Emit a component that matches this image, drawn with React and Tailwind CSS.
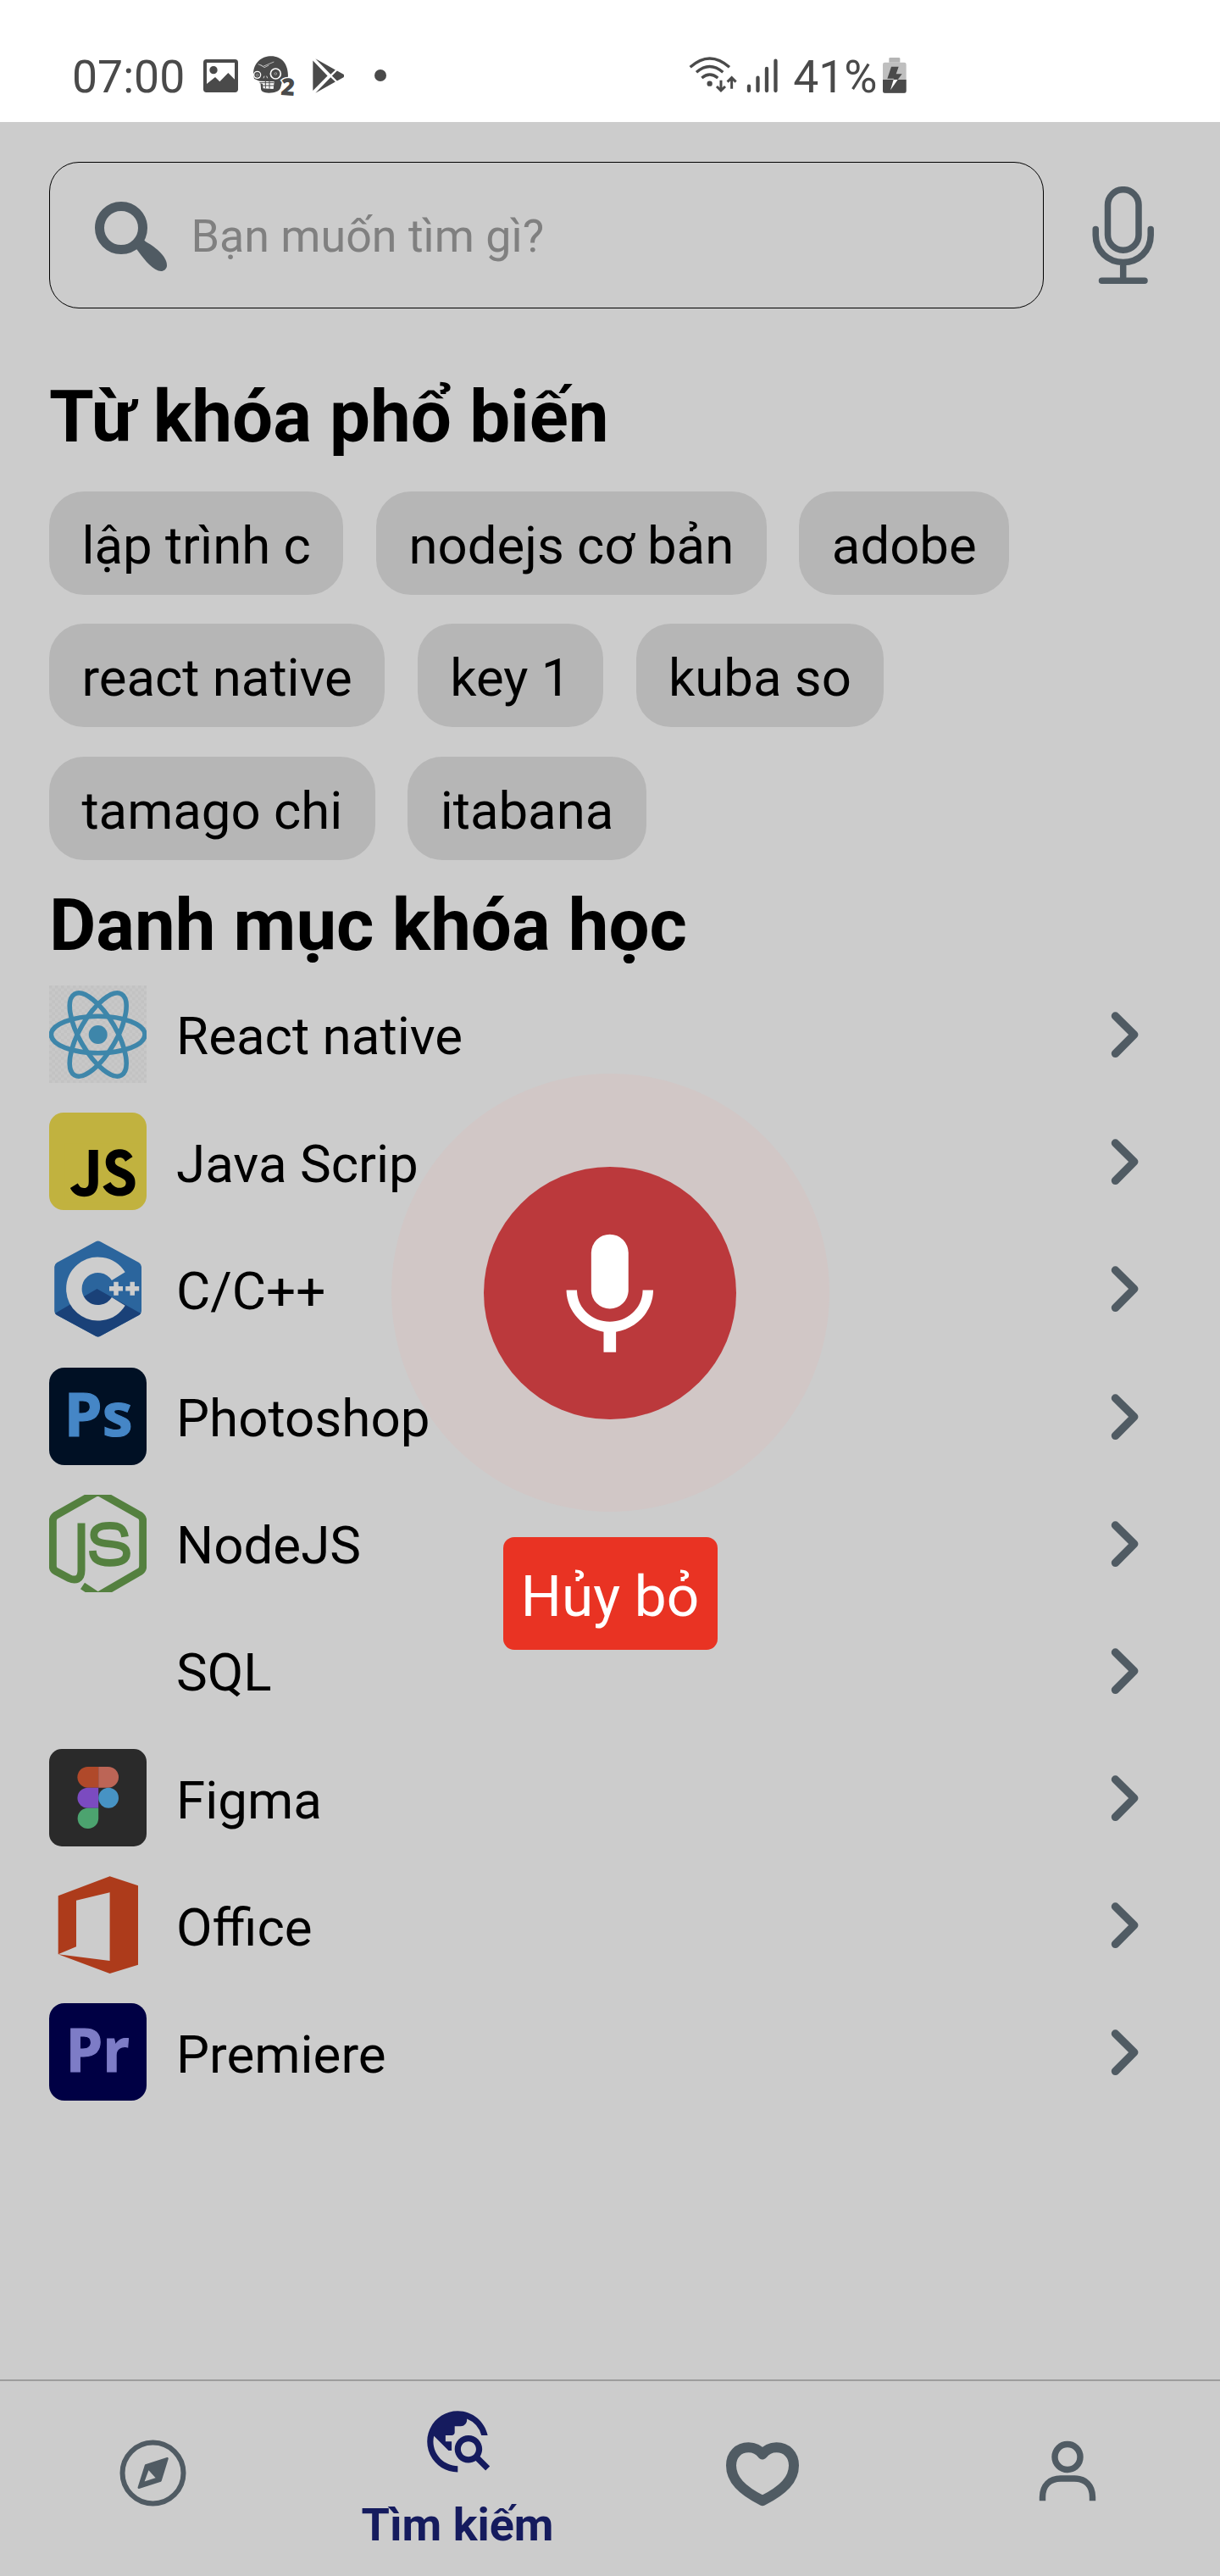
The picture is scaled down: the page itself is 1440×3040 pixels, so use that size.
import { SiJavascript } from "react-icons/si";
import { MdTravelExplore } from "react-icons/md";

const INK = "#4a4a4a";
const SLATE = "#505b63";

function StatusBar() {
  return (
    <header className="flex h-[144px] shrink-0 items-start bg-white pl-[85px] text-[53.5px] leading-[54px] text-[#4a4a4a]">
      <div className="flex w-[728px] items-start">
        <span className="mt-[64px] w-[155px]">07:00</span>
        <svg className="mt-[69.7px] h-[39px] w-[41px]" viewBox="30 41 123 117">
          <rect x="30" y="41" width="123" height="117" rx="11" fill={INK} />
          <path d="M42 53H141V112L118 89L88 120L72 104L42 128Z" fill="#fff" />
          <circle cx="66" cy="79" r="14" fill={INK} />
        </svg>
        <svg className="mt-[65.7px] ml-[18px] h-[48px] w-[49px] overflow-visible" viewBox="207 29 147 144">
          <path d="M207 92C208 52 238 30 270 30C308 30 331 58 330 104L312 108L304 140C300 154 284 160 262 160C244 160 233 154 234 143L232 120L210 110Z" fill={INK} />
          <path d="M224 58L242 66L280 50M232 60L246 70L262 62" fill="none" stroke="#bbb" strokeWidth="3" />
          <circle cx="221" cy="96" r="12" fill={INK} stroke="#fff" strokeWidth="4" />
          <circle cx="286" cy="92" r="18" fill={INK} stroke="#fff" strokeWidth="5" />
          <circle cx="221" cy="97" r="4" fill="none" stroke="#bbb" strokeWidth="2" />
          <circle cx="286" cy="92" r="4" fill="none" stroke="#bbb" strokeWidth="2" />
          <path d="M243 108L246 100M254 100L257 108" stroke="#ddd" strokeWidth="3" />
          <path d="M229 118L281 120L278 146L242 144L240 128L229 124Z" fill="#fff" />
          <path d="M229 124H280M250 119V144M264 119V145M240 134H280" stroke={INK} strokeWidth="3" />
          <text x="303" y="167" fontFamily="Open Sans" fontWeight="800" fontSize="84" fill={INK} stroke="#fff" strokeWidth="9" paintOrder="stroke" transform="rotate(4 303 167)">2</text>
        </svg>
        <svg className="mt-[69px] ml-[20.5px] h-[41px] w-[37.5px]" viewBox="415 39 113 122">
          <path d="M416 46L468 100L416 153ZM425 39L496 79L479 95ZM502 82L525 95Q530 100 525 105L502 118L484 100ZM425 161L496 121L479 105Z" fill={INK} />
        </svg>
        <span className="mt-[82px] ml-[36px] h-[14px] w-[14px] rounded-full bg-[#4a4a4a]" />
      </div>
      <svg className="mt-[66px] h-[44px] w-[57.3px]" viewBox="38 30 172 132">
        <g fill="none" stroke={INK} strokeWidth="10">
          <path d="M43 70Q112 8 182 70" />
          <path d="M65 88Q112 47 159 88" />
          <path d="M84 108Q112 84 141 108" />
          <path d="M152 116V152M137 138L152 153L167 138M190 146V108M175 122L190 107L205 122" strokeWidth="9" />
        </g>
        <circle cx="112" cy="128" r="9.5" fill={INK} />
      </svg>
      <svg className="mt-[69.3px] ml-[10.3px] h-[40.7px] w-[37.3px]" viewBox="241 40 112 122">
        <path d="M250 138V154M281.500 108V154M313 76V154M344.500 48V154" stroke={INK} strokeWidth="13" strokeLinecap="round" />
      </svg>
      <span className="mt-[64px] ml-[18.3px] w-[106.300px]">41%</span>
      <svg className="mt-[67.7px] h-[42.3px] w-[27.7px]" viewBox="727 35 83 127">
        <path d="M749 52V39Q749 35 753 35H784Q788 35 788 39V52Z" fill="#b5b5b5" />
        <rect x="727" y="52" width="83" height="110" rx="7" fill="#bfbfbf" />
        <path d="M727 113H810V152Q810 160 802 160H735Q727 160 727 152Z" fill={INK} />
        <path d="M757 67H783L774 93H795L780 113H764L767 109H743Z" fill={INK} />
        <path d="M765 113H780L754 150Z" fill="#fff" />
      </svg>
    </header>
  );
}

function SearchRow() {
  return (
    <div className="mt-[47px] flex items-start">
      <div className="flex h-[173px] w-[1174px] items-center rounded-[35px] border border-black pl-[53px]">
        <svg className="mt-[5px] h-[84px] w-[87px] shrink-0" viewBox="0 0 87 84">
          <circle cx="31" cy="31" r="25.500" fill="none" stroke={SLATE} strokeWidth="11" />
          <path d="M47 54L57 44Q59 47 63 49C75 56 86 67 85 76C84 81 80 83 75 81.500C65 78 56 65 50 57Q49 56 47 54Z" fill={SLATE} />
        </svg>
        <span className="mt-[2px] ml-[26.500px] text-[53.8px] leading-[70px] text-[#808080]">Bạn muốn tìm gì?</span>
      </div>
      <svg className="mt-[29px] ml-[56.500px] h-[116px] w-[74px]" viewBox="0 0 74 116" fill="none" stroke={SLATE} strokeWidth="7.500" strokeLinecap="round">
        <rect x="18.500" y="3.700" width="36.500" height="71.500" rx="18.200" />
        <path d="M4.250 50.500V57.500C4.250 76 18.500 89.500 36.700 89.500S69.200 76 69.200 57.500V50.500M36.700 91V110M11.500 111.300H62" />
      </svg>
    </div>
  );
}

const keywordRows = [
  ["lập trình c", "nodejs cơ bản", "adobe"],
  ["react native", "key 1", "kuba so"],
  ["tamago chi", "itabana"],
];

function ReactLogo() {
  return (
    <svg className="h-full w-full" viewBox="0 0 115 115.500">
      <defs>
        <pattern id="checker" width="7" height="7" patternUnits="userSpaceOnUse">
          <rect width="7" height="7" fill="#c8c8c8" />
          <rect width="3.500" height="3.500" fill="#c2c2c2" />
          <rect x="3.500" y="3.500" width="3.500" height="3.500" fill="#c2c2c2" />
        </pattern>
      </defs>
      <rect width="115" height="115.500" fill="url(#checker)" />
      <g fill="none" stroke="#3e86aa" strokeWidth="5.600">
        <ellipse cx="57.700" cy="58" rx="55.300" ry="21.700" />
        <ellipse cx="57.700" cy="58" rx="55.300" ry="21.700" transform="rotate(60 57.700 58)" />
        <ellipse cx="57.700" cy="58" rx="55.300" ry="21.700" transform="rotate(120 57.700 58)" />
      </g>
      <circle cx="57.700" cy="58" r="11" fill="#3e86aa" />
    </svg>
  );
}

function JsLogo() {
  return (
    <svg className="h-full w-full" viewBox="0 0 115 115.500">
      <rect width="115" height="115" rx="17" fill="#c1b23f" />
      <rect x="24" y="43" width="80" height="58" fill="#000" />
      <svg x="18.500" y="36.500" width="92.500" height="70" viewBox="5 9.500 19 14.140" preserveAspectRatio="none">
        <SiJavascript size={24} color="#c1b23f" />
      </svg>
    </svg>
  );
}

function CppLogo() {
  return (
    <svg className="h-full w-full" viewBox="0 0 115 115.500">
      <defs>
        <clipPath id="hex">
          <path d="M54.500 2.500Q57.700 .5 60.900 2.500L106 27Q109 29 109 32V83.500Q109 87 106 89L60.900 113.500Q57.700 115.500 54.500 113.500L9.200 89Q6.200 87 6.200 83.500V32Q6.200 29 9.200 27Z" />
        </clipPath>
      </defs>
      <g clipPath="url(#hex)">
        <rect width="115" height="116" fill="#2b659d" />
        <path d="M0 91L56.500 58L115 91V116H0Z" fill="#1a4178" />
      </g>
      <path d="M81.800 43.200A28.300 28.300 0 1 0 81.800 72.800" fill="none" stroke="#cdcdcd" strokeWidth="18.500" />
      <path d="M71 57.800H87M79 49.800V65.800M90.200 57.800H106.200M98.200 49.800V65.800" stroke="#cdcdcd" strokeWidth="5.500" />
    </svg>
  );
}

function AdobeLogo({ label, x, width, bg, fg }) {
  return (
    <svg className="h-full w-full" viewBox="0 0 115 115.500">
      <rect width="115" height="115" rx="18" fill={bg} />
      <text x={x} y="81" fontFamily="Open Sans" fontWeight="700" fontSize="72" textLength={width} lengthAdjust="spacingAndGlyphs" fill={fg} stroke={fg} strokeWidth="1.2">{label}</text>
    </svg>
  );
}

function NodeLogo() {
  return (
    <svg className="h-full w-full" viewBox="0 0 115 115.500" fill="none" stroke="#54803f">
      <path d="M38 33.500V89C38 100 31 102 23.500 98.500L7.500 90Q4.300 88 4.300 84V31Q4.300 27 7.500 24.500L57.500 -3.700L107.500 24.500Q110.700 27 110.700 31V84Q110.700 88 107.500 90.500L57.500 119.400L39.500 107.500" strokeWidth="9" />
      <path d="M89.500 49.700C88 39 83 36.400 71.500 36.400C59 36.400 52.800 40 52.800 47.500C52.800 55 59 56.700 71.500 58C85 59.500 91.500 61.500 91.500 69C91.500 77 85 80.300 71.500 80.300C58 80.300 51.700 76 51.400 66" strokeWidth="8.700" />
    </svg>
  );
}

function FigmaLogo() {
  return (
    <svg className="h-full w-full" viewBox="0 0 115 115.500">
      <rect width="115" height="115" rx="15" fill="#2a2a2a" />
      <path d="M58.200 21H45.700A12.300 12.350 0 0 0 45.700 45.700H58.200Z" fill="#b0492a" />
      <path d="M58.200 21H69.700A12.300 12.350 0 0 1 69.700 45.700H58.200Z" fill="#bc6556" />
      <path d="M58.200 45.700H45.700A12.300 12 0 0 0 45.700 69.700H58.200Z" fill="#7b4bc0" />
      <ellipse cx="70.100" cy="57.700" rx="11.900" ry="12" fill="#4793c4" />
      <path d="M58.200 69.700H45.700A12.300 12.150 0 1 0 58.200 82Z" fill="#4ca36f" />
    </svg>
  );
}

function OfficeLogo() {
  return (
    <svg className="h-full w-full" viewBox="0 0 115 115.500">
      <path d="M10.700 92.300V23.300L71.600 .3L105 11.300V104.700L71.600 115L10.700 92.300L71.600 100V19.300L32 28.700V83.300Z" fill="#ad3b1b" />
    </svg>
  );
}

const categories = [
  { name: "React native", logo: <ReactLogo /> },
  { name: "Java Scrip", logo: <JsLogo /> },
  { name: "C/C++", logo: <CppLogo /> },
  { name: "Photoshop", logo: <AdobeLogo label="Ps" x={17.5} width={81} bg="#001024" fg="#4586c6" /> },
  { name: "NodeJS", logo: <NodeLogo /> },
  { name: "SQL", logo: null },
  { name: "Figma", logo: <FigmaLogo /> },
  { name: "Office", logo: <OfficeLogo /> },
  { name: "Premiere", logo: <AdobeLogo label="Pr" x={19.5} width={75.5} bg="#000044" fg="#7d7cc6" /> },
];

function CategoryRow({ name, logo }) {
  return (
    <li className="flex h-[150.2px] items-start">
      <div className="h-[115.5px] w-[115px] shrink-0 overflow-hidden">{logo}</div>
      <span className="mt-[20.5px] ml-[35px] grow text-[61.9px] leading-[80px]">{name}</span>
      <svg className="mt-[30px] mr-[95px] h-[56px] w-[34px]" viewBox="0 0 34 56" fill="none" stroke={SLATE} strokeWidth="9.500" strokeLinecap="round" strokeLinejoin="round">
        <path d="M5.500 6L27.700 28L5.500 50.300" />
      </svg>
    </li>
  );
}

function BottomNav() {
  return (
    <nav className="mt-auto grid h-[232px] shrink-0 grid-cols-4 justify-items-center border-t-2 border-[#9c9c9c]">
      <svg className="mt-[68.500px] h-[79px] w-[79px]" viewBox="0 0 79 79">
        <circle cx="39.500" cy="39.500" r="36" fill="none" stroke={SLATE} strokeWidth="6" />
        <path fillRule="evenodd" d="M31 30.500L56.500 22.300L48.500 48.500L22.800 56.700ZM34 33.800L27.500 51.500L45 45.800Z" fill={SLATE} stroke={SLATE} strokeWidth="2.500" strokeLinejoin="round" />
      </svg>
      <div className="flex flex-col items-center text-[#151b5e]">
        <MdTravelExplore className="mt-[28px] h-[86.600px] w-[86.600px]" />
        <span className="mt-[25.400px] text-[53.9px] leading-[60px] font-bold">Tìm kiếm</span>
      </div>
      <svg className="mt-[71px] h-[78px] w-[86px]" viewBox="0 0 86 78">
        <path d="M43 15.500C38.500 9.500 33 7.300 26.500 7.300C14.500 7.300 6 16 6 28.500C6 45 18 57.500 43 70.200C68 57.500 80 45 80 28.500C80 16 71.500 7.300 59.500 7.300C53 7.300 47.500 9.500 43 15.500Z" fill="none" stroke={SLATE} strokeWidth="12" strokeLinejoin="round" />
      </svg>
      <svg className="mt-[70px] h-[72px] w-[68px]" viewBox="0 0 68 72" fill="none" stroke={SLATE} strokeWidth="7.400">
        <circle cx="34" cy="19.500" r="15" />
        <path d="M4.500 71.300V67C4.500 53 13 45 26 45H42C55 45 63.500 53 63.500 67V71.300" />
      </svg>
    </nav>
  );
}

function VoiceOverlay() {
  return (
    <div className="absolute inset-x-0 top-[1267px] flex flex-col items-center">
      <div className="flex h-[517px] w-[517px] items-center justify-center rounded-full bg-[#d1c7c6]">
        <div className="flex h-[298px] w-[298px] items-center justify-center rounded-full bg-[#bb393c]">
          <svg className="mt-[8px] h-[175.600px] w-[175.600px]" viewBox="0 0 24 24" fill="#fff">
            <rect x="9" y="2" width="6" height="12" rx="3" />
            <path d="M17.300 11C17.300 14 14.760 16.100 12 16.100S6.700 14 6.700 11H5C5 14.410 7.720 17.230 11 17.720V21H13V17.720C16.280 17.240 19 14.420 19 11Z" />
          </svg>
        </div>
      </div>
      <button className="mt-[30px] h-[133px] w-[253px] rounded-[13px] bg-[#e93323] pt-[7px] text-center text-[67.500px] leading-[126px] text-white">Hủy bỏ</button>
    </div>
  );
}

export default function App() {
  return (
    <div className="relative flex h-[3040px] w-[1440px] flex-col overflow-hidden bg-[#cccccc] font-['Roboto',sans-serif] text-black">
      <StatusBar />
      <main className="pl-[58px]">
        <SearchRow />
        <h2 className="mt-[78px] text-[85.3px] leading-[100px] font-bold">Từ khóa phổ biến</h2>
        <div className="mt-[38px] flex flex-col gap-[34.4px]">
          {keywordRows.map((row) => (
            <div key={row[0]} className="flex gap-[38.8px]">
              {row.map((word) => (
                <span key={word} className="h-[122px] rounded-[41px] bg-[#b6b6b6] px-[38.4px] pt-[6px] text-[61.7px] leading-[116px]">{word}</span>
              ))}
            </div>
          ))}
        </div>
        <h2 className="mt-[27.2px] text-[85.2px] leading-[100px] font-bold">Danh mục khóa học</h2>
        <ul className="mt-[21px]">
          {categories.map((item) => (
            <CategoryRow key={item.name} {...item} />
          ))}
        </ul>
      </main>
      <BottomNav />
      <VoiceOverlay />
    </div>
  );
}
